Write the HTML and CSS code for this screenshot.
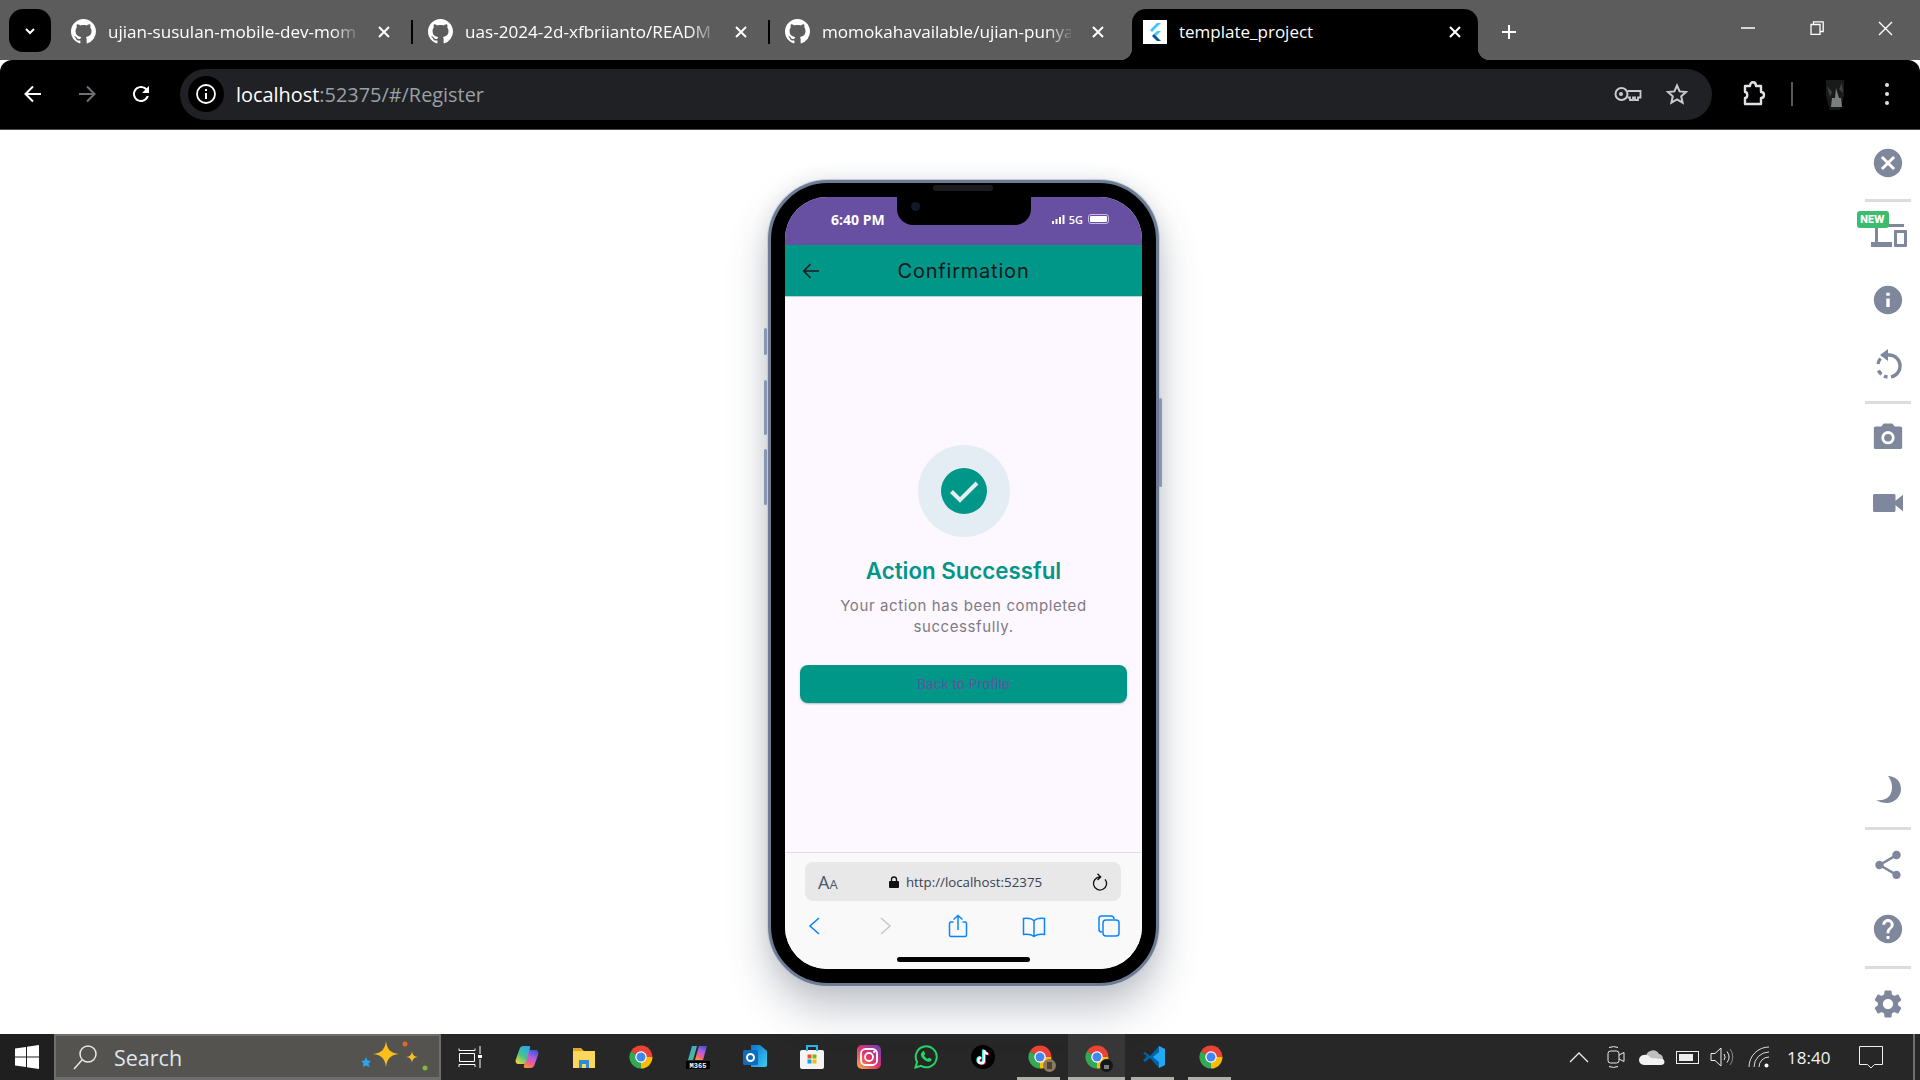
FILE: index.html
```html
<!DOCTYPE html>
<html>
<head>
  <meta charset="utf-8">
  <title>template_project</title>
  <link rel="stylesheet" href="styles.css">
</head>
<body>
  <svg class="defs" width="0" height="0">
    <defs>
      <symbol id="gh" viewBox="0 0 16 16"><path fill-rule="evenodd" d="M8 0C3.58 0 0 3.58 0 8c0 3.54 2.29 6.53 5.47 7.59.4.07.55-.17.55-.38 0-.19-.01-.82-.01-1.49-2.01.37-2.53-.49-2.69-.94-.09-.23-.48-.94-.82-1.13-.28-.15-.68-.52-.01-.53.63-.01 1.08.58 1.23.82.72 1.21 1.87.87 2.33.66.07-.52.28-.87.51-1.07-1.78-.2-3.64-.89-3.64-3.95 0-.87.31-1.59.82-2.15-.08-.2-.36-1.02.08-2.12 0 0 .67-.21 2.2.82.64-.18 1.32-.27 2-.27.68 0 1.36.09 2 .27 1.53-1.04 2.2-.82 2.2-.82.44 1.1.16 1.92.08 2.12.51.56.82 1.27.82 2.15 0 3.07-1.87 3.75-3.65 3.95.29.25.54.73.54 1.48 0 1.07-.01 1.93-.01 2.2 0 .21.15.46.55.38A8.013 8.013 0 0016 8c0-4.42-3.58-8-8-8z"/></symbol>
      <symbol id="x" viewBox="0 0 14 14"><path d="M2 2l10 10M12 2L2 12" fill="none" stroke="currentColor" stroke-width="2"/></symbol>
      <symbol id="chrome" viewBox="0 0 48 48">
        <path fill="#ea4335" d="M24 24L4 12.5A23 23 0 0 1 47 24Z"/>
        <path fill="#fbbc04" d="M24 24L47 24A23 23 0 0 1 24 47Z"/>
        <path fill="#34a853" d="M24 24L24 47A23 23 0 0 1 4 12.5Z"/>
        <circle cx="24" cy="24" r="11.5" fill="#fff"/>
        <circle cx="24" cy="24" r="9" fill="#4285f4"/>
      </symbol>
      <linearGradient id="cop1" x1="0.8" y1="0" x2="0.2" y2="1"><stop offset="0" stop-color="#2aa5f0"/><stop offset="0.55" stop-color="#45c48a"/><stop offset="1" stop-color="#f2d33c"/></linearGradient>
      <linearGradient id="cop2" x1="0.7" y1="0" x2="0.3" y2="1"><stop offset="0" stop-color="#3b58d8"/><stop offset="0.4" stop-color="#b45be0"/><stop offset="0.75" stop-color="#ef5f90"/><stop offset="1" stop-color="#f7933a"/></linearGradient>
      <linearGradient id="m365a" x1="0" y1="0" x2="1" y2="1"><stop offset="0" stop-color="#2aa5f0"/><stop offset="1" stop-color="#5ec46a"/></linearGradient>
      <linearGradient id="insta" x1="0" y1="1" x2="1" y2="0"><stop offset="0" stop-color="#fcb045"/><stop offset="0.5" stop-color="#e1306c"/><stop offset="1" stop-color="#6a3fc7"/></linearGradient>
      <linearGradient id="outl" x1="0" y1="0" x2="1" y2="1"><stop offset="0" stop-color="#1070c8"/><stop offset="1" stop-color="#38d0f2"/></linearGradient>
    </defs>
  </svg>

  <div class="tabstrip">
    <div class="tab-menu">
      <svg width="14" height="14" viewBox="0 0 14 14"><path d="M3 5l4 4 4-4" fill="none" stroke="#fff" stroke-width="2"/></svg>
    </div>
    <div class="tab">
      <svg class="tab-icon"><use href="#gh"/></svg>
      <span class="tab-title">ujian-susulan-mobile-dev-mom</span>
      <svg class="tab-close"><use href="#x"/></svg>
      <span class="tab-sep"></span>
    </div>
    <div class="tab">
      <svg class="tab-icon"><use href="#gh"/></svg>
      <span class="tab-title">uas-2024-2d-xfbriianto/READM</span>
      <svg class="tab-close"><use href="#x"/></svg>
      <span class="tab-sep"></span>
    </div>
    <div class="tab">
      <svg class="tab-icon"><use href="#gh"/></svg>
      <span class="tab-title">momokahavailable/ujian-punya</span>
      <svg class="tab-close"><use href="#x"/></svg>
    </div>
    <div class="tab-active">
      <svg class="favicon" viewBox="0 0 24 24">
        <rect width="24" height="24" fill="#fff"/>
        <path fill="#47c5fb" d="M14 3h4l-9 9-2-2z"/>
        <path fill="#47c5fb" d="M14 11h4l-5 5-2-2z"/>
        <path fill="#00569e" d="M11 14l2 2 1 1 4 4h-4l-5-5z"/>
      </svg>
      <span class="tab-active-title">template_project</span>
      <svg class="tab-close tab-active-close"><use href="#x"/></svg>
    </div>
    <div class="tab-new">
      <svg width="16" height="16" viewBox="0 0 16 16"><path d="M8 1v14M1 8h14" stroke="#fff" stroke-width="2"/></svg>
    </div>
    <div class="win-controls">
      <div class="win-btn"><svg width="14" height="14" viewBox="0 0 14 14"><path d="M0 7h14" stroke="#fff" stroke-width="1.5"/></svg></div>
      <div class="win-btn"><svg width="14" height="14" viewBox="0 0 14 14"><path d="M1 3.5h9v10H1zM3.5 3.5V.8h9.7v9.7H10" fill="none" stroke="#fff" stroke-width="1.3"/></svg></div>
      <div class="win-btn"><svg width="15" height="15" viewBox="0 0 15 15"><path d="M1 1l13 13M14 1L1 14" stroke="#fff" stroke-width="1.4"/></svg></div>
    </div>
  </div>

  <div class="toolbar">
    <div class="tool-btn"><svg width="22" height="22" viewBox="0 0 22 22"><path d="M19 11H4M11 3.5L3.5 11l7.5 7.5" fill="none" stroke="#fff" stroke-width="2"/></svg></div>
    <div class="tool-btn"><svg width="22" height="22" viewBox="0 0 22 22"><path d="M3 11h15M11 3.5l7.5 7.5-7.5 7.5" fill="none" stroke="#6f7175" stroke-width="2"/></svg></div>
    <div class="tool-btn"><svg width="24" height="24" viewBox="0 0 24 24"><path fill="#fff" d="M17.65 6.35C16.2 4.9 14.21 4 12 4c-4.42 0-7.99 3.58-7.99 8s3.57 8 7.99 8c3.73 0 6.84-2.55 7.73-6h-2.08c-.82 2.33-3.04 4-5.65 4-3.31 0-6-2.69-6-6s2.69-6 6-6c1.66 0 3.14.69 4.22 1.78L13 11h7V4l-2.35 2.35z"/></svg></div>
    <div class="omnibox">
      <div class="omni-chip">
        <svg width="22" height="22" viewBox="0 0 22 22"><circle cx="11" cy="11" r="9" fill="none" stroke="#fff" stroke-width="1.8"/><path d="M11 10v6M11 6v2" stroke="#fff" stroke-width="2"/></svg>
      </div>
      <span class="omni-url">localhost<span class="omni-dim">:52375/#/Register</span></span>
      <div class="omni-actions">
        <svg width="28" height="18" viewBox="0 0 28 18"><circle cx="7.500" cy="9" r="6" fill="none" stroke="#c8cacd" stroke-width="2"/><circle cx="7" cy="9" r="2" fill="#c8cacd"/><path d="M13.500 6h13v6.500h-2.500V15h-3v-2.500h-2V15h-3v-2.500h-2.500" fill="none" stroke="#c8cacd" stroke-width="1.800"/></svg>
        <svg width="24" height="24" viewBox="0 0 24 24"><path d="M12 3.5l2.6 5.9 6.4.6-4.8 4.3 1.4 6.3-5.6-3.3-5.6 3.3 1.4-6.3L3 10l6.4-.6z" fill="none" stroke="#c8cacd" stroke-width="2"/></svg>
      </div>
    </div>
    <div class="tool-right">
      <div class="ext-btn"><svg width="26" height="28" viewBox="0 0 26 28"><path d="M4 6h5c0-5 6-5 6 0h5v6c4 0 4 6 0 6v6H4v-6c3 0 3-6 0-6z" fill="none" stroke="#dfe1e4" stroke-width="2.4" stroke-linejoin="round"/></svg></div>
      <span class="tool-sep"></span>
      <div class="avatar-btn">
        <svg width="26" height="32" viewBox="0 0 26 32"><path fill="#181b1a" d="M4 2h18v16l-4 14H8L4 18z"/><path fill="#7b7f7d" d="M10 20h9l1 9H9zM14 10l3 10h-4z"/><path fill="#3c4443" d="M5 8l5 6-2 5zM20 5l1 10-4-4z"/></svg>
      </div>
      <div class="kebab"><span></span><span></span><span></span></div>
    </div>
  </div>

  <div class="main">
    <div class="phone">
      <span class="hw hw-mute"></span>
      <span class="hw hw-up"></span>
      <span class="hw hw-down"></span>
      <span class="hw hw-power"></span>
      <span class="speaker"></span>
      <div class="screen">
        <div class="notch"><span class="cam"></span></div>
        <div class="statusbar">
          <span class="clock">6:40 PM</span>
          <div class="status-right">
            <svg width="13" height="9" viewBox="0 0 13 9"><path fill="#fff" d="M0 6h2v3H0zM3.5 4h2v5h-2zM7 2h2v7H7zM10.5 0h2v9h-2z"/></svg>
            <span class="net">5G</span>
            <span class="battery"><span class="battery-fill"></span></span>
          </div>
        </div>
        <div class="appbar">
          <svg class="appbar-back" width="18" height="18" viewBox="0 0 18 18"><path d="M17 9H2M8.5 2L1.8 9l6.7 7" fill="none" stroke="#1c1b1f" stroke-width="1.6"/></svg>
          <span class="appbar-title">Confirmation</span>
        </div>
        <div class="page">
          <div class="check-wrap">
            <svg width="46" height="46" viewBox="0 0 46 46"><circle cx="23" cy="23" r="23" fill="#009688"/><path d="M10.5 23.5l8.5 8.5 17-17" fill="none" stroke="#e6eef3" stroke-width="4"/></svg>
          </div>
          <h1 class="page-title">Action Successful</h1>
          <p class="page-text">Your action has been completed successfully.</p>
          <div class="page-btn">Back to Profile</div>
        </div>
        <div class="safari">
          <div class="safari-url">
            <span class="aa">A<small>A</small></span>
            <span class="safari-addr">
              <svg width="10" height="12" viewBox="0 0 10 12"><path fill="#111" d="M1 5h8a1 1 0 0 1 1 1v5a1 1 0 0 1-1 1H1a1 1 0 0 1-1-1V6a1 1 0 0 1 1-1z"/><path d="M2.5 5V3.500a2.500 2.500 0 0 1 5 0V5" fill="none" stroke="#111" stroke-width="1.300"/></svg>
              http://localhost:52375
            </span>
            <svg width="16" height="18" viewBox="0 0 16 18"><path d="M8 4A6.500 6.500 0 1 0 13 6.300M5.500 .8L8.700 4 5.500 7" fill="none" stroke="#111" stroke-width="1.300"/></svg>
          </div>
          <div class="safari-nav">
            <svg width="24" height="24" viewBox="0 0 24 24"><path d="M14 4L5 12l9 8" transform="translate(2 0)" fill="none" stroke="#0a84ff" stroke-width="1.600"/></svg>
            <svg width="24" height="24" viewBox="0 0 24 24"><path d="M8 4l9 8-9 8" fill="none" stroke="#c9c9cc" stroke-width="1.600"/></svg>
            <svg width="24" height="24" viewBox="0 0 24 24"><path d="M7.500 8H5a1.500 1.500 0 0 0-1.500 1.500V21A1.500 1.500 0 0 0 5 22.500h14a1.500 1.500 0 0 0 1.500-1.500V9.500A1.500 1.500 0 0 0 19 8h-2.500M12 16V1.500M7.500 5.500L12 1.500l4.500 4" fill="none" stroke="#0a84ff" stroke-width="1.500"/></svg>
            <svg width="24" height="24" viewBox="0 0 24 24"><path d="M12 7c-2-2.500-6-3-10.500-2.500V20.500c4-.5 8 0 10.500 2 2.500-2 6.500-2.500 10.500-2V4.500C18 4 14 4.500 12 7zM12 7v15" fill="none" stroke="#0a84ff" stroke-width="1.500"/></svg>
            <svg width="24" height="24" viewBox="0 0 24 24"><rect x="6" y="6" width="16" height="16" rx="3" fill="none" stroke="#0a84ff" stroke-width="1.500"/><path d="M5 18H4.500A2.500 2.500 0 0 1 2 15.500V4.500A2.500 2.500 0 0 1 4.500 2h10A3 3 0 0 1 17 5" fill="none" stroke="#0a84ff" stroke-width="1.500"/></svg>
          </div>
          <div class="home-bar"></div>
        </div>
      </div>
    </div>

    <div class="sidebar">
      <div class="side-group">
        <div class="side-btn side-close"><svg width="34" height="34" viewBox="0 0 24 24"><path d="M12 2C6.470 2 2 6.470 2 12s4.470 10 10 10 10-4.470 10-10S17.530 2 12 2zm5 13.590L15.590 17 12 13.410 8.410 17 7 15.590 10.590 12 7 8.410 8.410 7 12 10.590 15.590 7 17 8.410 13.410 12 17 15.590z"/></svg></div>
        <div class="side-rule side-rule-a"></div>
        <div class="side-btn side-device">
          <span class="new-badge">NEW</span>
          <svg width="36" height="28" viewBox="0 0 36 28"><path d="M4 4h29v3H7v15h14v5H0v-5h4zM24 10h11a1 1 0 0 1 1 1v15a1 1 0 0 1-1 1H24a1 1 0 0 1-1-1V11a1 1 0 0 1 1-1zm2 3v11h7V13z" fill-rule="evenodd"/></svg>
        </div>
        <div class="side-btn side-info"><svg width="34" height="34" viewBox="0 0 24 24"><path d="M12 2C6.480 2 2 6.480 2 12s4.480 10 10 10 10-4.480 10-10S17.520 2 12 2zm1.200 15h-2.400v-6h2.400v6zm0-8h-2.400V6.800h2.400V9z"/></svg></div>
        <div class="side-btn side-rotate"><svg width="30" height="32" viewBox="0 0 30 32"><path d="M14 6h3a11 11 0 0 1 1 21.800" fill="none" stroke="#7e879b" stroke-width="3.400"/><path d="M15 0v12l-8-6z"/><path d="M5 15a11 11 0 0 1 2.500-5.500M5.500 21.500a11 11 0 0 0 3 3.800M11 27a11 11 0 0 0 3.500 1" fill="none" stroke="#7e879b" stroke-width="3.400"/></svg></div>
        <div class="side-rule side-rule-b"></div>
        <div class="side-btn side-camera"><svg width="34" height="34" viewBox="0 0 24 24"><path d="M9 2.500L7.170 4.500H3.500c-1.100 0-1.500.5-1.500 1.500v13c0 1 .4 1.500 1.500 1.500h17c1.100 0 1.500-.5 1.500-1.500V6c0-1-.4-1.500-1.500-1.500h-3.670L15 2.500H9zm3 14.700a4.700 4.700 0 1 1 0-9.400 4.700 4.700 0 0 1 0 9.400z"/><circle cx="12" cy="12.500" r="2.700"/></svg></div>
        <div class="side-btn side-video"><svg width="36" height="36" viewBox="0 0 24 24"><path d="M17 10.500V7c0-.55-.45-1-1-1H3c-.55 0-1 .45-1 1v10c0 .55.45 1 1 1h13c.55 0 1-.45 1-1v-3.500l5 4v-11l-5 4z"/></svg></div>
      </div>
      <div class="side-group">
        <div class="side-btn"><svg width="30" height="30" viewBox="0 0 30 30"><path d="M15 1c7 0 13 5 13 13 0 8-7 14-14 14-4 0-8-1-11-3 8 1 13-2 15-7 2-6 1-12-3-17z"/></svg></div>
        <div class="side-rule side-rule-c"></div>
        <div class="side-btn side-share"><svg width="34" height="34" viewBox="0 0 24 24"><path d="M18 16.080c-.76 0-1.440.3-1.960.77L8.910 12.700c.05-.23.090-.46.090-.7s-.04-.47-.09-.7l7.050-4.110c.54.500 1.250.81 2.040.81 1.660 0 3-1.340 3-3s-1.340-3-3-3-3 1.340-3 3c0 .24.04.47.09.7L8.040 9.810C7.500 9.310 6.790 9 6 9c-1.660 0-3 1.340-3 3s1.340 3 3 3c.79 0 1.500-.31 2.040-.81l7.120 4.160c-.05.21-.08.43-.08.65 0 1.610 1.310 2.920 2.920 2.920 1.610 0 2.920-1.310 2.920-2.920s-1.310-2.920-2.920-2.920z"/></svg></div>
        <div class="side-btn side-help"><svg width="34" height="34" viewBox="0 0 24 24"><path d="M12 2C6.480 2 2 6.480 2 12s4.480 10 10 10 10-4.480 10-10S17.520 2 12 2zm1 17h-2v-2h2v2zm2.070-7.750l-.9.92C13.450 12.900 13 13.500 13 15h-2v-.5c0-1.100.45-2.100 1.170-2.830l1.240-1.260c.37-.36.59-.86.59-1.410 0-1.100-.9-2-2-2s-2 .9-2 2H8c0-2.210 1.790-4 4-4s4 1.790 4 4c0 .88-.36 1.680-.93 2.250z"/></svg></div>
        <div class="side-rule side-rule-d"></div>
        <div class="side-btn side-gear"><svg width="34" height="34" viewBox="0 0 24 24"><path d="M19.140 12.940c.04-.3.06-.61.06-.94 0-.32-.02-.64-.07-.94l2.030-1.580c.18-.14.23-.41.12-.61l-1.920-3.320c-.12-.22-.37-.29-.59-.22l-2.390.96c-.5-.38-1.030-.7-1.620-.94l-.36-2.540c-.04-.24-.24-.41-.48-.41h-3.840c-.24 0-.43.17-.47.41l-.36 2.540c-.59.24-1.130.57-1.620.94l-2.390-.96c-.22-.08-.47 0-.59.22L2.740 8.870c-.12.21-.08.47.12.61l2.030 1.580c-.05.3-.09.63-.09.94s.02.64.07.94l-2.030 1.580c-.18.14-.23.41-.12.61l1.920 3.320c.12.22.37.29.59.22l2.390-.96c.5.38 1.030.7 1.620.94l.36 2.540c.05.24.24.41.48.41h3.840c.24 0 .44-.17.47-.41l.36-2.540c.59-.24 1.130-.56 1.620-.94l2.390.96c.22.08.47 0 .59-.22l1.920-3.320c.12-.22.07-.47-.12-.61l-2.010-1.580zM12 15.600c-1.980 0-3.600-1.620-3.600-3.600s1.620-3.600 3.600-3.600 3.600 1.620 3.600 3.600-1.620 3.600-3.600 3.600z"/></svg></div>
      </div>
    </div>
  </div>

  <div class="taskbar">
    <div class="start">
      <svg width="24" height="24" viewBox="0 0 24 24"><path fill="#fff" d="M0 3.500L11 2v9.500H0zM12 1.800L24 0v11.500H12zM0 12.500h11V22L0 20.500zM12 12.500h12V24l-12-1.800z"/></svg>
    </div>
    <div class="search">
      <svg width="28" height="28" viewBox="0 0 28 28"><circle cx="17" cy="11" r="8" fill="none" stroke="#e8e8e8" stroke-width="1.500"/><path d="M11 17L3 26" stroke="#e8e8e8" stroke-width="1.500"/></svg>
      <span class="search-text">Search</span>
      <svg class="search-art" width="70" height="34" viewBox="0 0 70 34">
        <path fill="#2aa5f0" d="M6 17l1.500 3.500L11 21l-2.500 2.500 1 3.500L6 25.500 3 27l.5-4L1 21l3.500-.5z"/>
        <path fill="#fbbf1c" d="M26 1c1 8 4 12 13 13-9 1-12 5-13 13-1-8-4-12-13-13 9-1 12-5 13-13z"/>
        <path fill="#fbbf1c" d="M52 11c.5 4 2 5.500 6 6-4 .5-5.500 2-6 6-.5-4-2-5.500-6-6 4-.5 5.500-2 6-6z"/>
        <circle cx="45" cy="4" r="2.500" fill="#e0662c"/>
        <circle cx="65" cy="28" r="2.500" fill="#7dba3a"/>
      </svg>
    </div>
    <div class="task-apps">
      <div class="task-app">
        <svg width="24" height="24" viewBox="0 0 24 24"><path fill="none" stroke="#fff" d="M1 3.500V5.500H17V3.500M1.500 8.500H16.500V16.500H1.500ZM1 22V19.500H17V22M22 1V9M22 14V23"/><rect x="20" y="10" width="4" height="3" fill="#fff"/></svg>
      </div>
      <div class="task-app">
        <svg width="24" height="24" viewBox="0 0 24 24"><path fill="url(#cop2)" d="M15 23h-5c-1 0-1.500-1-1-2.500L13 7c.5-1.500 1.500-2 3-2h4c3 0 4 2 3 5l-3.500 10c-.5 2-2 3-4.500 3z"/><path fill="url(#cop1)" d="M9 1h5c1 0 1.500 1 1 2.500L11 17c-.5 1.500-1.500 2-3 2H4c-3 0-4-2-3-5L4.500 4C5 2 6.500 1 9 1z"/></svg>
      </div>
      <div class="task-app">
        <svg width="24" height="24" viewBox="0 0 24 24"><path fill="#e2a91e" d="M1 3h8l3 3h11v4H1z"/><path fill="#fbd75b" d="M1 6h22v17H1z"/><path fill="#2f8bd6" d="M7 15h10v8h-3v-4h-4v4H7z"/></svg>
      </div>
      <div class="task-app"><svg width="24" height="24"><use href="#chrome"/></svg></div>
      <div class="task-app">
        <svg width="24" height="24" viewBox="0 0 24 24"><path fill="url(#m365a)" d="M6 1h5L7 15H2z"/><path fill="url(#cop2)" d="M13 1h8L17 15H9z"/><rect y="16" width="24" height="8" fill="#000"/><text class="m365" x="12" y="22.500" text-anchor="middle">M365</text></svg>
      </div>
      <div class="task-app">
        <svg width="24" height="24" viewBox="0 0 24 24"><path fill="url(#outl)" d="M8 0h9l7 6v14a2 2 0 0 1-2 2H8z"/><rect y="5" width="15" height="15" rx="1.500" fill="#0f6cbd"/><circle cx="7.500" cy="12.500" r="3.500" fill="none" stroke="#fff" stroke-width="2"/></svg>
      </div>
      <div class="task-app">
        <svg width="24" height="24" viewBox="0 0 24 24"><rect y="5" width="24" height="19" rx="2" fill="#f4f4f4"/><path d="M7 6V1h10v5" fill="none" stroke="#27b4ea" stroke-width="2"/><path fill="#f25022" d="M7.500 9.500h4v4h-4z"/><path fill="#7fba00" d="M12.500 9.500h4v4h-4z"/><path fill="#00a4ef" d="M7.500 14.500h4v4h-4z"/><path fill="#ffb900" d="M12.500 14.500h4v4h-4z"/></svg>
      </div>
      <div class="task-app">
        <svg width="24" height="24" viewBox="0 0 24 24"><rect width="24" height="24" rx="5" fill="url(#insta)"/><rect x="4" y="4" width="16" height="16" rx="4.500" fill="none" stroke="#fff" stroke-width="1.800"/><circle cx="12" cy="12" r="4" fill="none" stroke="#fff" stroke-width="1.800"/><circle cx="17.300" cy="6.700" r="1.200" fill="#fff"/></svg>
      </div>
      <div class="task-app">
        <svg width="24" height="24" viewBox="0 0 24 24"><path d="M1.500 22.500l1.600-5.500A10.500 10.500 0 1 1 7 20.900z" fill="none" stroke="#25d366" stroke-width="2"/><path fill="#25d366" d="M8.500 6.500c1-.7 1.500-.5 2 .7l.6 1.600c.1.500-.7 1.300-1 1.700.8 1.500 2 2.700 3.500 3.400.5-.4 1.200-1.300 1.700-1.100l1.800.9c.8.400.6 1.300.1 2-1 1.100-2.400 1.300-4 .7-3.500-1.300-5.500-3.500-6.300-6.200-.3-1.200.5-2.200 1.600-3.700z"/></svg>
      </div>
      <div class="task-app">
        <svg width="24" height="24" viewBox="0 0 24 24"><circle cx="12" cy="12" r="12" fill="#000"/><path d="M13 5v10.500a2.800 2.800 0 1 1-2.800-2.800M13 5c.3 2.200 1.800 3.600 4 3.900" transform="translate(1 0.500)" fill="none" stroke="#ee1d52" stroke-width="2.200"/><path d="M13 5v10.500a2.800 2.800 0 1 1-2.800-2.800M13 5c.3 2.200 1.800 3.600 4 3.900" transform="translate(-1 -0.500)" fill="none" stroke="#25f4ee" stroke-width="2.200"/><path d="M13 5v10.500a2.800 2.800 0 1 1-2.800-2.800M13 5c.3 2.200 1.800 3.600 4 3.900" fill="none" stroke="#fff" stroke-width="2.200"/></svg>
      </div>
      <div class="task-app task-open">
        <svg width="24" height="24"><use href="#chrome"/></svg>
        <svg class="task-badge" width="13" height="13" viewBox="0 0 13 13"><circle cx="6.500" cy="6.500" r="6.500" fill="#8b7a60"/><path fill="#4e4433" d="M4 3h5v7H4z"/></svg>
      </div>
      <div class="task-app task-open task-current">
        <svg width="24" height="24"><use href="#chrome"/></svg>
        <svg class="task-badge" width="13" height="13" viewBox="0 0 13 13"><circle cx="6.500" cy="6.500" r="6.500" fill="#15181a"/><path fill="#7b7f7d" d="M4 6h5v4H4z"/></svg>
      </div>
      <div class="task-app task-open">
        <svg width="24" height="24" viewBox="0 0 24 24"><path fill="#0065a9" d="M1 8.500l2-1.500 5 4 9-10 6 3v16l-6 3-9-10-5 4-2-1.500 4-4.500z"/><path fill="#23a9f1" d="M17 1l6 3v16l-6 3zM17 7l-6 5 6 5z" fill-rule="evenodd"/></svg>
      </div>
      <div class="task-app task-open"><svg width="24" height="24"><use href="#chrome"/></svg></div>
    </div>
    <div class="tray">
      <div class="tray-item tray-chevron"><svg width="20" height="12" viewBox="0 0 20 12"><path d="M1 11l9-9 9 9" fill="none" stroke="#eee" stroke-width="1.300"/></svg></div>
      <div class="tray-item tray-cam"><svg width="18" height="24" viewBox="0 0 18 24"><rect x="1" y="6" width="11" height="12" rx="2.500" fill="none" stroke="#eee"/><path d="M12 10l5-2.500v9L12 14M2 2.500a12 12 0 0 1 9 0M2 21.500a12 12 0 0 0 9 0" fill="none" stroke="#eee"/></svg></div>
      <div class="tray-item tray-cloud"><svg width="26" height="16" viewBox="0 0 26 16"><path fill="#bfbfbf" d="M7 7a7 7 0 0 1 13-2 5 5 0 0 1 4 5l-14 1z"/><path fill="#f2f2f2" d="M5 16a5 5 0 0 1 0-10c3-1 5 1 7 3l12 1c3 3 1 6-2 6z"/></svg></div>
      <div class="tray-item tray-battery"><span class="tray-batt"><span class="tray-batt-fill"></span></span></div>
      <div class="tray-item tray-speaker"><svg width="24" height="20" viewBox="0 0 24 20"><path d="M1 6.500h4L11 1v18l-6-5.500H1z" fill="none" stroke="#eee"/><path d="M14 7a5 5 0 0 1 0 6M17 4.500a9 9 0 0 1 0 11" fill="none" stroke="#eee"/><path d="M20 2a13 13 0 0 1 0 16" fill="none" stroke="#888"/></svg></div>
      <div class="tray-item tray-wifi"><svg width="22" height="22" viewBox="0 0 22 22"><path d="M1 21A20 20 0 0 1 21 1M6 21A15 15 0 0 1 21 6M11 21A10 10 0 0 1 21 11" fill="none" stroke="#ddd"/><circle cx="18.500" cy="19.500" r="2" fill="#fff"/></svg></div>
      <span class="tray-time">18:40</span>
      <div class="tray-item tray-notify"><svg width="24" height="24" viewBox="0 0 24 24"><path d="M.5 1.500h23v18h-8L12 23l-3.500-3.500h-8z" fill="none" stroke="#eee"/></svg></div>
      <span class="tray-edge"></span>
    </div>
  </div>
</body>
</html>
```

FILE: styles.css
```css
* {
  box-sizing: border-box;
}
html, body {
  margin: 0;
  height: 100%;
}
body {
  width: 1920px;
  height: 1080px;
  overflow: hidden;
  display: flex;
  flex-direction: column;
  background: #fff;
  font-family: "Open Sans", "Noto Sans", sans-serif;
}
.defs {
  display: block;
  height: 0;
}

/* browser tabs */
.tabstrip {
  height: 60px;
  flex: none;
  display: flex;
  align-items: flex-start;
  padding-left: 9px;
  background: #5c5c5c;
  color: #fff;
}
.tab-menu {
  width: 42px;
  height: 43px;
  margin: 9px 5px 0 0;
  border-radius: 14px;
  background: #000;
  display: flex;
  align-items: center;
  justify-content: center;
}
.tab {
  width: 357px;
  height: 45px;
  margin-top: 9px;
  padding-left: 15px;
  display: flex;
  align-items: center;
  flex: none;
}
.tab-icon {
  width: 25px;
  height: 25px;
  flex: none;
  fill: #fff;
}
.tab-title {
  width: 249px;
  margin-left: 12px;
  flex: none;
  white-space: nowrap;
  font-size: 17.100px;
  -webkit-mask-image: linear-gradient(90deg, #000 90%, rgba(0, 0, 0, 0.15));
  mask-image: linear-gradient(90deg, #000 90%, rgba(0, 0, 0, 0.15));
}
.tab-close {
  width: 14px;
  height: 14px;
  margin-left: 20px;
  flex: none;
  color: #fff;
}
.tab-sep {
  width: 2px;
  height: 24px;
  margin-left: 20px;
  flex: none;
  background: #000;
}
.tab-active {
  position: relative;
  width: 346px;
  height: 51px;
  margin: 9px 0 0 5px;
  padding: 0 16px 6px 11px;
  display: flex;
  align-items: center;
  flex: none;
  background: #000;
  border-radius: 14px 14px 0 0;
}
.tab-active::before,
.tab-active::after {
  content: "";
  position: absolute;
  bottom: 0;
  width: 12px;
  height: 12px;
}
.tab-active::before {
  left: -12px;
  background: radial-gradient(circle at 0 0, transparent 12px, #000 12.5px);
}
.tab-active::after {
  right: -12px;
  background: radial-gradient(circle at 100% 0, transparent 12px, #000 12.5px);
}
.favicon {
  width: 24px;
  height: 24px;
  flex: none;
}
.tab-active-title {
  margin-left: 12px;
  font-size: 17px;
  white-space: nowrap;
}
.tab-active-close {
  margin-left: auto;
}
.tab-new {
  width: 62px;
  height: 45px;
  margin-top: 9px;
  display: flex;
  align-items: center;
  justify-content: center;
}
.win-controls {
  margin-left: auto;
  display: flex;
}
.win-btn {
  width: 69px;
  height: 60px;
  display: flex;
  align-items: center;
  justify-content: center;
  padding-bottom: 4px;
}

/* toolbar */
.toolbar {
  height: 70px;
  flex: none;
  display: flex;
  align-items: center;
  padding: 0 0 1px 6px;
  background: #000;
  border-bottom: 1px solid #4a4a4a;
  border-radius: 12px 12px 0 0;
}
.tool-btn {
  width: 54px;
  height: 51px;
  flex: none;
  display: flex;
  align-items: center;
  justify-content: center;
}
.omnibox {
  flex: 1;
  height: 51px;
  margin-left: 12px;
  padding: 0 23px 0 8px;
  display: flex;
  align-items: center;
  background: #202124;
  border-radius: 26px;
}
.omni-chip {
  width: 36px;
  height: 36px;
  border-radius: 50%;
  background: #000;
  display: flex;
  align-items: center;
  justify-content: center;
  flex: none;
}
.omni-url {
  margin-left: 12px;
  font-size: 19.900px;
  color: #fff;
  white-space: nowrap;
}
.omni-dim {
  color: #9aa0a6;
}
.omni-actions {
  margin-left: auto;
  display: flex;
  align-items: center;
  gap: 23px;
}
.tool-right {
  width: 208px;
  flex: none;
  display: flex;
  align-items: center;
}
.ext-btn {
  width: 79px;
  padding-left: 5px;
  display: flex;
  justify-content: center;
}
.tool-sep {
  width: 2px;
  height: 24px;
  background: #55585c;
}
.avatar-btn {
  width: 83px;
  display: flex;
  justify-content: center;
}
.kebab {
  width: 22px;
  display: flex;
  flex-direction: column;
  align-items: center;
  gap: 5px;
}
.kebab span {
  width: 4px;
  height: 4px;
  border-radius: 50%;
  background: #e3e3e3;
}

/* page with the device preview */
.main {
  flex: 1;
  min-height: 0;
  display: flex;
  justify-content: space-between;
  padding-left: 768px;
}
.phone {
  position: relative;
  width: 391px;
  height: 806px;
  margin-top: 50px;
  padding: 14px;
  border: 3px solid #6d7b94;
  border-radius: 60px;
  background: #000;
  box-shadow: 0 0 0 1px #c3cbd8, 0 24px 40px rgba(60, 70, 90, 0.3), 0 0 18px rgba(60, 70, 90, 0.12);
}
.hw {
  position: absolute;
  width: 3px;
  background: #8796b2;
  border-radius: 2px;
}
.hw-mute {
  left: -7px;
  top: 145px;
  height: 27px;
}
.hw-up {
  left: -7px;
  top: 197px;
  height: 55px;
}
.hw-down {
  left: -7px;
  top: 266px;
  height: 56px;
}
.hw-power {
  right: -6px;
  top: 215px;
  height: 89px;
}
.speaker {
  position: absolute;
  left: 162px;
  top: 2px;
  width: 60px;
  height: 6px;
  background: #1b1b1d;
  border-radius: 3px;
  z-index: 2;
}
.screen {
  position: relative;
  height: 100%;
  display: flex;
  flex-direction: column;
  overflow: hidden;
  border-radius: 42px;
  background: #fdf7ff;
}
.notch {
  position: absolute;
  left: 112px;
  top: 0;
  width: 134px;
  height: 28px;
  background: #000;
  border-radius: 0 0 16px 16px;
}
.cam {
  position: absolute;
  left: 14px;
  top: 5px;
  width: 9px;
  height: 9px;
  border-radius: 50%;
  background: #12182a;
}
.statusbar {
  height: 48px;
  flex: none;
  display: flex;
  align-items: center;
  padding: 0 33px 4px 46px;
  background: #674fa2;
  color: #fff;
}
.clock {
  font-family: "Open Sans", sans-serif;
  font-size: 14px;
  font-weight: 700;
}
.status-right {
  margin-left: auto;
  display: flex;
  align-items: center;
  gap: 4px;
}
.net {
  font-size: 11px;
  font-weight: 600;
}
.battery {
  width: 21px;
  height: 10px;
  margin-left: 1px;
  padding: 1px;
  border: 1px solid #c8bbe6;
  border-radius: 3px;
  display: flex;
}
.battery-fill {
  flex: 1;
  background: #fff;
  border-radius: 1px;
}
.appbar {
  position: relative;
  height: 52px;
  flex: none;
  display: flex;
  align-items: center;
  justify-content: center;
  background: #009688;
  border-bottom: 1px solid #b5d5da;
}
.appbar-back {
  position: absolute;
  left: 17px;
  top: 17px;
}
.appbar-title {
  font-family: Inter, sans-serif;
  font-size: 20px;
  letter-spacing: 0.800px;
  color: #14181a;
}
.page {
  flex: 1;
  min-height: 0;
  padding: 0 15px 1px;
  display: flex;
  flex-direction: column;
  align-items: center;
  justify-content: center;
}
.check-wrap {
  width: 92px;
  height: 92px;
  border-radius: 50%;
  background: #e4edf3;
  display: flex;
  align-items: center;
  justify-content: center;
}
.page-title {
  margin: 19px 0 0;
  font-family: Inter, sans-serif;
  font-size: 22.300px;
  line-height: 30px;
  font-weight: 600;
  color: #009688;
}
.page-text {
  width: 270px;
  margin: 9px 0 0;
  font-family: Inter, sans-serif;
  font-size: 15px;
  letter-spacing: 0.600px;
  line-height: 21px;
  text-align: center;
  color: #7f7b83;
}
.page-btn {
  align-self: stretch;
  height: 38px;
  margin: 28px 0 0;
  display: flex;
  align-items: center;
  justify-content: center;
  background: #009688;
  border-radius: 8px;
  box-shadow: 0 1px 2px rgba(0, 0, 0, 0.25);
  font-family: Inter, sans-serif;
  font-size: 13.500px;
  color: #674fa2;
}

/* fake safari bar in the device */
.safari {
  height: 117px;
  flex: none;
  background: #f9f9f9;
  border-top: 1px solid #e0dce2;
  padding-top: 9px;
}
.safari-url {
  height: 39px;
  margin: 0 21px 0 20px;
  padding: 0 13px;
  display: flex;
  align-items: center;
  justify-content: space-between;
  background: #e8e8e8;
  border-radius: 8px;
}
.aa {
  width: 21px;
  font-size: 18px;
  color: #4d5568;
}
.aa small {
  font-size: 13px;
}
.safari-addr {
  display: flex;
  align-items: center;
  gap: 7px;
  font-family: "Open Sans", sans-serif;
  font-size: 13.300px;
  color: #3a4256;
}
.safari-nav {
  height: 45px;
  margin-top: 2px;
  padding-left: 18px;
  display: grid;
  grid-template-columns: 70px 73px 76px 75px 24px;
  align-items: center;
}
.home-bar {
  width: 133px;
  height: 5px;
  margin: 9px auto 0;
  border-radius: 3px;
  background: #000;
}

/* tools on the right edge */
.sidebar {
  width: 65px;
  flex: none;
  padding: 13px 0 10px;
  display: flex;
  flex-direction: column;
  justify-content: space-between;
  align-items: center;
  fill: #7e879b;
}
.side-group {
  display: flex;
  flex-direction: column;
  align-items: center;
}
.side-btn {
  position: relative;
  width: 46px;
  height: 40px;
  display: flex;
  align-items: center;
  justify-content: center;
}
.side-rule {
  width: 46px;
  height: 3px;
  background: #dcdce0;
}
.side-rule-a {
  margin-top: 16px;
}
.side-rule-b {
  margin-top: 16px;
}
.side-rule-c {
  margin-top: 17px;
}
.side-rule-d {
  margin-top: 17px;
}
.side-device {
  margin-top: 10px;
}
.side-info {
  margin-top: 28px;
}
.side-rotate {
  margin-top: 25px;
}
.side-camera {
  margin-top: 13px;
}
.side-video {
  margin-top: 26px;
}
.side-share {
  margin-top: 15px;
}
.side-help {
  margin-top: 24px;
}
.side-gear {
  margin-top: 15px;
}
.side-device svg {
  margin: 4px 0 0 2px;
}
.new-badge {
  position: absolute;
  left: -8px;
  top: -1px;
  width: 32px;
  height: 17px;
  border-radius: 3px;
  background: #3dbb6e;
  color: #fff;
  font-family: Inter, sans-serif;
  font-size: 10px;
  font-weight: 800;
  line-height: 17px;
  text-align: center;
  z-index: 1;
}

/* windows taskbar */
.taskbar {
  height: 46px;
  flex: none;
  display: flex;
  background: #272727;
}
.start {
  width: 54px;
  display: flex;
  align-items: center;
  justify-content: center;
  background: #1f1f1f;
}
.search {
  width: 387px;
  padding: 0 9px 0 15px;
  display: flex;
  align-items: center;
  background: #545350;
  border: 2px solid #6e6e6e;
  border-bottom-width: 3px;
}
.search-text {
  margin: 2px 0 0 15px;
  font-size: 21.500px;
  color: #dfe6ee;
}
.search-art {
  margin-left: auto;
}
.task-apps {
  display: flex;
}
.task-app {
  position: relative;
  width: 57px;
  display: flex;
  align-items: center;
  justify-content: center;
}
.task-open::after {
  content: "";
  position: absolute;
  left: 6px;
  right: 8px;
  bottom: 0;
  height: 3px;
  background: #b0b0a8;
}
.task-current {
  background: #373737;
}
.task-current::after {
  left: 0;
  right: 0;
}
.task-badge {
  position: absolute;
  left: 32px;
  top: 25px;
}
.m365 {
  font-family: "Liberation Mono", monospace;
  font-size: 7px;
  font-weight: 700;
  fill: #fff;
}
.tray {
  margin-left: auto;
  display: flex;
  align-items: center;
  color: #f2f2f2;
}
.tray-item {
  display: flex;
  align-items: center;
  justify-content: center;
}
.tray-chevron {
  width: 37px;
}
.tray-cam {
  width: 37px;
}
.tray-cloud {
  width: 35px;
}
.tray-battery {
  width: 36px;
}
.tray-speaker {
  width: 34px;
}
.tray-wifi {
  width: 40px;
}
.tray-batt {
  width: 23px;
  height: 13px;
  padding: 2px 5px 2px 2px;
  border: 1px solid #eee;
  display: flex;
}
.tray-batt-fill {
  flex: 1;
  background: #eee;
}
.tray-time {
  width: 66px;
  padding-left: 8px;
  font-family: "Open Sans", sans-serif;
  font-size: 17px;
  text-align: left;
}
.tray-notify {
  width: 52px;
}
.tray-edge {
  align-self: stretch;
  width: 2px;
  margin-left: 16px;
  margin-right: 5px;
  background: #6e6e6e;
}
```
